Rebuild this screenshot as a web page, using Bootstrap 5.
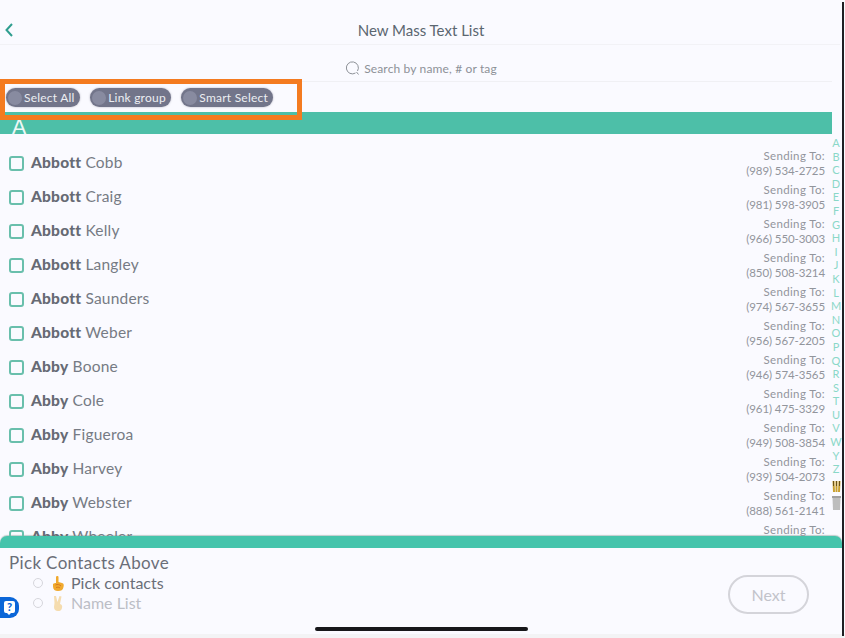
<!DOCTYPE html>
<html lang="en">
<head>
    <meta charset="UTF-8">
    <meta name="viewport" content="width=device-width, initial-scale=1.0">
    <title>New Mass Text List</title>
    <link href="https://cdn.jsdelivr.net/npm/bootstrap@5.3.0/dist/css/bootstrap.min.css" rel="stylesheet">
    <style>
        html, body { height: 100%; }
        body {
            background: #fafaff;
            font-family: Lato, "Liberation Sans", sans-serif;
            color: #5f6570;
            overflow: hidden;
        }
        .app-page { width: 845px; height: 638px; position: relative; }
        .top-bar { height: 45px; width: 840px; border-bottom: 1px solid #f2f2f6; padding: 16px 0 0 2px; }
        .back-btn { left: 4px; top: 22px; line-height: 0; }
        .top-title { font-size: 15px; color: #5b6670; line-height: 28px; }
        .search-row { height: 37px; width: 832px; border-bottom: 1px solid #f0f0f4; font-size: 12px; color: #8d9197; letter-spacing: .15px; padding: 11px 0 0 10px; }
        .chip-row { height: 30px; padding: 6px 0 0 6px; gap: 10px; }
        .chip-pill {
            height: 19px; background: #72758a; color: #eceef2; border-radius: 10px;
            font-size: 12px; letter-spacing: .22px; padding: 0 5.5px 0 2px; gap: 2px;
            box-shadow: 0 0 2px rgba(90,90,110,.5);
        }
        .chip-dot { width: 14px; height: 14px; border-radius: 50%; background: #888ba0; }
        .orange-box { left: 0; top: 79px; width: 302px; height: 41px; border: 5px solid #f47b20; }
        .letter-band { height: 22px; width: 832px; background: #4dbfa8; color: #eef8f6; font-size: 21px; line-height: 27px; padding-left: 12px; overflow: hidden; }
        .contact-list { height: 402px; width: 832px; overflow: hidden; padding-top: 12px; }
        .contact-row { height: 34px; padding-left: 9px; padding-right: 7px; }
        .tick-box { width: 15px; height: 15px; border: 2px solid #69bfac; border-radius: 3px; margin-right: 7px; }
        .contact-name { font-size: 15.5px; color: #767b84; letter-spacing: .2px; }
        .contact-name b { font-weight: 900; color: #666a74; }
        .send-info { font-size: 11.5px; line-height: 15px; color: #92959c; text-align: right; letter-spacing: .35px; margin-top: -1px; }
        .send-phone { letter-spacing: -.1px; }
        .alpha-index { right: 3px; top: 136px; width: 12px; font-size: 11px; line-height: 13.6px; color: #8ad8c8; text-align: center; }
        .side-icons { right: 3px; top: 480px; width: 10px; gap: 3px; }
        .green-bar { height: 12px; width: 842px; background: #45c4ac; border-radius: 7px 7px 0 0; box-shadow: 0 -1px 1px rgba(80,120,110,.35); }
        .foot-area { height: 85px; width: 842px; padding: 5px 0 0 9px; position: relative; }
        .foot-title { font-size: 17px; line-height: 20px; color: #6a6e78; letter-spacing: .35px; }
        .step-row { padding-left: 24px; font-size: 16px; line-height: 20px; color: #6a6e78; gap: 6px; }
        .step-row.is-off { color: #bcbec6; }
        .step-dot { width: 10px; height: 10px; border: 1px solid #d6d6dc; border-radius: 50%; margin-right: 2px; }
        .next-btn {
            position: absolute; left: 728px; top: 27px; width: 81px; height: 39px;
            border: 2px solid #d4d4da; border-radius: 20px; background: transparent;
            color: #c2c3ca; font-size: 16px; padding: 0;
        }
        .help-badge { left: 0; top: 597px; width: 19px; height: 21px; background: #0b66d8; border-radius: 0 9px 9px 0; }
        .help-mark { width: 11px; height: 12px; background: #fff; color: #0b66d8; font-size: 11px; font-weight: 900; line-height: 12px; border-radius: 2px; text-align: center; position: relative; margin-top: -2px; }
        .help-mark::after { content: ""; position: absolute; left: 3px; top: 12px; border: 2.500px solid transparent; border-top-color: #fff; }
        .home-line { left: 315px; top: 627px; width: 213px; height: 4px; background: #17171a; border-radius: 2px; }
        .bottom-strip { left: 0; top: 634px; width: 845px; height: 4px; background: #f3f3f5; }
        .edge-line { left: 842px; top: 2px; width: 2px; height: 634px; background: #1f1f23; }
    </style>
</head>
<body>
    <div class="app-page">
        <div class="top-bar text-center">
            <div class="top-title">New Mass Text List</div>
        </div>
        <div class="position-absolute back-btn">
            <svg width="10" height="16" viewBox="0 0 10 16"><path d="M8 2 L2.500 8 L8 14" fill="none" stroke="#2f9e8f" stroke-width="2"/></svg>
        </div>

        <div class="search-row d-flex align-items-center justify-content-center gap-1">
            <svg width="15" height="15" viewBox="0 0 15 15"><path d="M10.500 12 A6 6 0 1 1 12.500 10" fill="none" stroke="#8d9197" stroke-width="1"/><path d="M11.500 11 L13.500 13.500" stroke="#8d9197" stroke-width="1"/></svg>
            <span>Search by name, # or tag</span>
        </div>

        <div class="chip-row d-flex align-items-start">
            <div class="chip-pill d-flex align-items-center"><span class="chip-dot"></span>Select All</div>
            <div class="chip-pill d-flex align-items-center"><span class="chip-dot"></span>Link group</div>
            <div class="chip-pill d-flex align-items-center"><span class="chip-dot"></span>Smart Select</div>
        </div>

        <div class="letter-band">A</div>

        <div class="contact-list" id="contact-list"></div>

        <div class="green-bar"></div>
        <div class="foot-area">
            <div class="foot-title">Pick Contacts Above</div>
            <div class="step-row d-flex align-items-center">
                <span class="step-dot"></span>
                <svg width="14" height="17" viewBox="0 0 14 17"><path d="M5 1.500 C6 .5 7.500 1 7.500 2 L7.500 7 L11 8 C13 8.500 13 10 12.500 12 C12 15 10 16 7 16 C4 16 2 14.500 2 11.500 L2 9 C3 8 4 8 5 8 Z" fill="#f0a92e"/><path d="M4.500 10 C6.500 9 8.500 9.500 10 11 M5 12.500 C6.500 12 8 12 9 13" fill="none" stroke="#d9791c" stroke-width="1"/></svg>
                <span>Pick contacts</span>
            </div>
            <div class="step-row is-off d-flex align-items-center">
                <span class="step-dot"></span>
                <svg width="14" height="17" viewBox="0 0 14 17"><path d="M3 1 L5 1 L6.500 7 L8.500 1 L10.500 1.500 L9 9 C11 9.500 11.500 11 11 13 C10.500 15.500 9 16 7 16 C4.500 16 3 14.500 3 12 L3.500 8 Z" fill="#f5dcae"/></svg>
                <span>Name List</span>
            </div>
            <button class="next-btn" type="button">Next</button>
        </div>

        <div class="position-absolute alpha-index d-flex flex-column" id="alpha-index"></div>
        <div class="position-absolute side-icons d-flex flex-column">
            <svg width="9" height="13" viewBox="0 0 9 13"><path d="M1.500 1 L2 12 M4.500 1 V12 M7.500 1 L7 12" stroke="#c9a02f" stroke-width="2"/><path d="M1.500 1 V6 M4.500 1 V6 M7.500 1 V6" stroke="#6b5216" stroke-width="1"/></svg>
            <svg width="9" height="14" viewBox="0 0 9 14"><path d="M0 0 H9 V2 H0 Z" fill="#a0a0a0"/><path d="M.5 2 H8.500 L8 14 H1 Z" fill="#bdbdbd"/></svg>
        </div>

        <div class="position-absolute orange-box"></div>
        <div class="position-absolute help-badge d-flex align-items-center justify-content-center">
            <div class="help-mark">?</div>
        </div>
        <div class="position-absolute bottom-strip"></div>
        <div class="position-absolute home-line"></div>
        <div class="position-absolute edge-line"></div>
    </div>

    <script src="https://cdn.jsdelivr.net/npm/bootstrap@5.3.0/dist/js/bootstrap.bundle.min.js"></script>
    <script>
        const contacts = [
            ['Abbott', 'Cobb', '(989) 534-2725'],
            ['Abbott', 'Craig', '(981) 598-3905'],
            ['Abbott', 'Kelly', '(966) 550-3003'],
            ['Abbott', 'Langley', '(850) 508-3214'],
            ['Abbott', 'Saunders', '(974) 567-3655'],
            ['Abbott', 'Weber', '(956) 567-2205'],
            ['Abby', 'Boone', '(946) 574-3565'],
            ['Abby', 'Cole', '(961) 475-3329'],
            ['Abby', 'Figueroa', '(949) 508-3854'],
            ['Abby', 'Harvey', '(939) 504-2073'],
            ['Abby', 'Webster', '(888) 561-2141'],
            ['Abby', 'Wheeler', '(888) 561-2141']
        ];
        const list = document.getElementById('contact-list');
        contacts.forEach(c => {
            const row = document.createElement('div');
            row.className = 'contact-row d-flex align-items-center';
            row.innerHTML = `<span class="tick-box"></span>
                <span class="contact-name flex-grow-1"><b>${c[0]}</b> ${c[1]}</span>
                <span class="send-info">Sending To:<br><span class="send-phone">${c[2]}</span></span>`;
            list.appendChild(row);
        });
        const index = document.getElementById('alpha-index');
        'ABCDEFGHIJKLMNOPQRSTUVWYZ'.split('').forEach(l => {
            const s = document.createElement('span');
            s.textContent = l;
            index.appendChild(s);
        });
    </script>
</body>
</html>
